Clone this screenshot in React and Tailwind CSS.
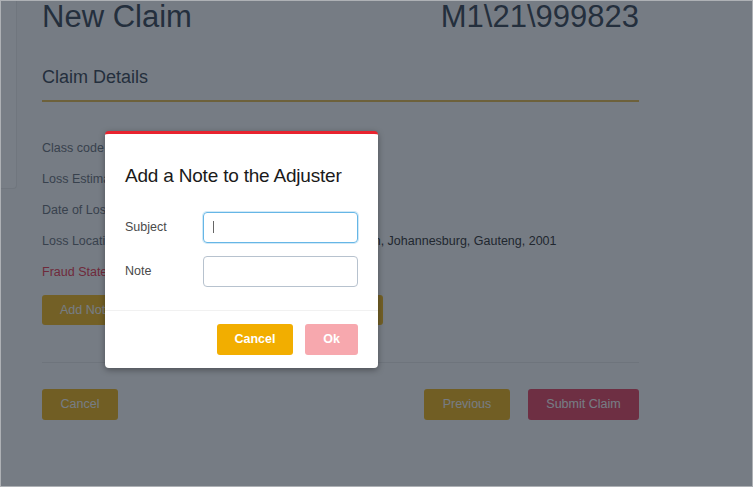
import React from 'react';

const rows = [
    { label: 'Class code', value: '' },
    { label: 'Loss Estimate', value: '' },
    { label: 'Date of Loss', value: '' },
    { label: 'Loss Location', value: '12 Jan Smuts Avenue, Braamfontein, Johannesburg, Gauteng, 2001' },
];

const NoteModal = () => (
    <div className="absolute left-[104px] top-[130px] w-[273px] rounded-[4px] border-t-[3px] border-[#e8232f] bg-white shadow-[0_2px_6px_rgba(0,0,0,0.35)]">
        <div className="px-[20px] pt-[32px] pb-[23px]">
            <h2 className="text-[19px] leading-none tracking-[-0.2px] text-[#1a1a1a]">Add a Note to the Adjuster</h2>
            <div className="mt-[27px] flex items-center">
                <label className="w-[78px] text-[12.5px] text-[#4a4a4a]">Subject</label>
                <div className="relative">
                    <input className="block h-[31px] w-[155px] rounded-[4px] border border-[#66b6e6] px-2 outline-none shadow-[0_0_0_1px_rgba(102,182,230,0.3)]" />
                    <span className="absolute left-[10px] top-[9px] h-[12px] w-px bg-[#666]" />
                </div>
            </div>
            <div className="mt-[13px] flex items-center">
                <label className="w-[78px] text-[12.5px] text-[#4a4a4a]">Note</label>
                <input className="block h-[31px] w-[155px] rounded-[4px] border border-[#b7c2ce] px-2 outline-none" />
            </div>
        </div>
        <div className="flex justify-end gap-[12px] border-t border-[#f1f1f1] px-[20px] pt-[13px] pb-[13px]">
            <button className="h-[31px] w-[76px] rounded-[3px] bg-[#f2ae00] text-[12.5px] font-bold text-white">Cancel</button>
            <button className="h-[31px] w-[53px] rounded-[3px] bg-[#f7a8ae] text-[12.5px] font-bold text-white">Ok</button>
        </div>
    </div>
);

export default function App() {
    return (
        <div
            className="relative h-[487px] w-[753px] overflow-hidden border border-[#aeb1b5] bg-white"
            style={{ fontFamily: '"Liberation Sans", Arial, sans-serif' }}
        >
            <div className="w-[638px] pl-[41px]">
                <div className="flex items-start justify-between">
                    <h1 className="text-[31px] leading-none text-[#4b5563]">New Claim</h1>
                    <span className="text-[31px] leading-none text-[#4b5563]">M1\21\999823</span>
                </div>

                <h3 className="mt-[36px] border-b-2 border-[#ecc45e] pb-[14px] text-[18px] leading-none text-[#4b5563]">
                    Claim Details
                </h3>

                <div className="mt-[31px] text-[12.5px] leading-[31px]">
                    {rows.map((r) => (
                        <div key={r.label} className="flex">
                            <span className="w-[136px] text-[#777d86]">{r.label}</span>
                            <span className="text-[#444]">{r.value}</span>
                        </div>
                    ))}
                    <div className="flex">
                        <span className="w-[136px] text-[#f04a5e]">Fraud Statement</span>
                    </div>
                </div>

                <div className="mt-[7px] flex gap-[10px]">
                    <button className="h-[30px] w-[80px] rounded-[3px] bg-[#f8c22f] pl-[18px] text-left text-[12.5px] text-white">Add Note</button>
                    <button className="h-[30px] w-[251px] rounded-[3px] bg-[#f8c22f] text-[12.5px] text-white">Upload Fraud Statement</button>
                </div>

                <div className="mt-[37px] border-t border-[#eeeeee]" />

                <div className="mt-[26px] flex items-center">
                    <button className="h-[31px] w-[76px] rounded-[3px] bg-[#f4bd2a] text-[12.5px] text-white">Cancel</button>
                    <div className="ml-auto flex gap-[18px]">
                        <button className="h-[31px] w-[86px] rounded-[3px] bg-[#f4bd2a] text-[12.5px] text-white">Previous</button>
                        <button className="h-[31px] w-[111px] rounded-[3px] bg-[#ee5570] text-[12.5px] text-white">Submit Claim</button>
                    </div>
                </div>
            </div>

            <div className="absolute inset-0 bg-[#06111f]/55" />
            <div className="absolute left-0 top-0 h-[188px] w-[16px] rounded-br-[4px] border-r border-b border-[#70767e] bg-[#787e86]" />

            <NoteModal />
        </div>
    );
}
